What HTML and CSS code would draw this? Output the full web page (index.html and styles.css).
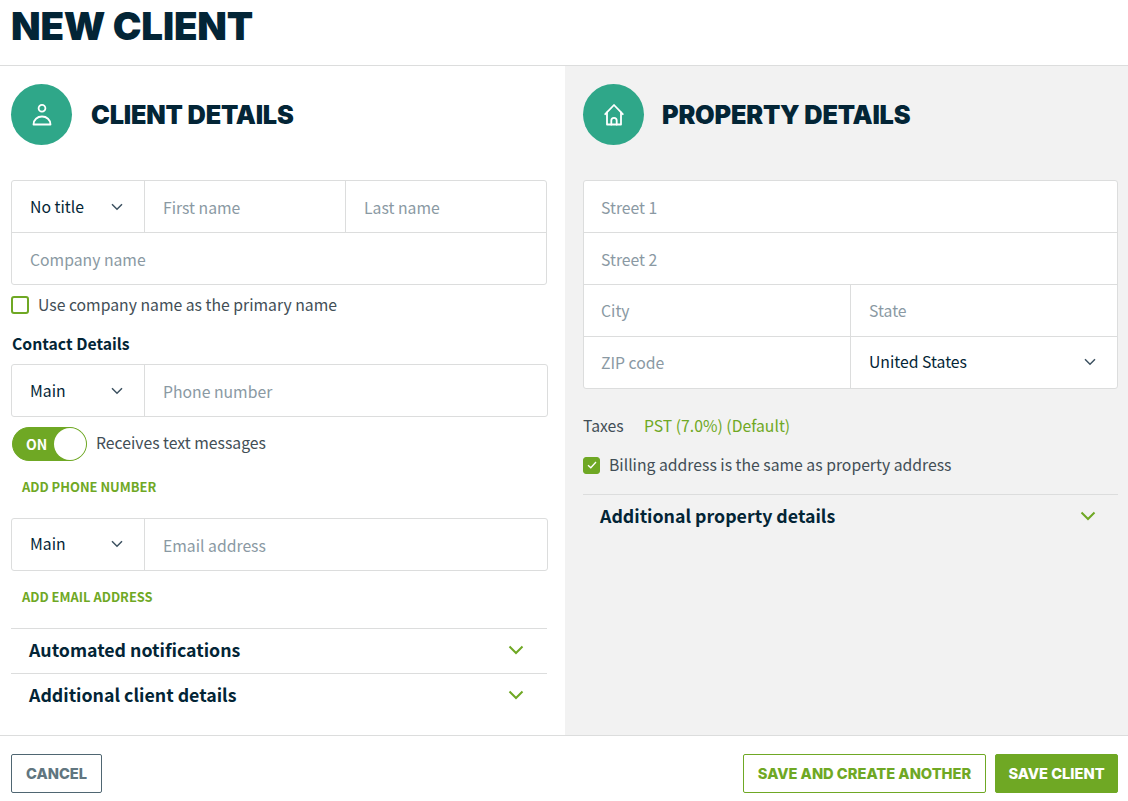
FILE: index.html
```html
<!DOCTYPE html>
<html lang="en">
<head>
<meta charset="utf-8">
<title>New Client</title>
<link rel="stylesheet" href="styles.css">
</head>
<body>
<header class="page-head"><h1>NEW CLIENT</h1></header>
<main class="columns">
  <section class="col col-left">
    <div class="sec-head">
      <span class="badge"><svg width="24" height="24" viewBox="0 0 24 24" fill="none" stroke="#fff" stroke-width="1.800"><circle cx="12" cy="5.200" r="3.400"/><path d="M3.500 21.500c0-4.700 3.800-8 8.500-8s8.500 3.300 8.500 8z" stroke-linejoin="round"/></svg></span>
      <h2>CLIENT DETAILS</h2>
    </div>
    <div class="box">
      <div class="row">
        <div class="cell sel"><span>No title</span><svg class="chev" width="12" height="8" viewBox="0 0 12 8"><path d="M1 1.200l5 5 5-5"/></svg></div>
        <div class="cell ph grow">First name</div>
        <div class="cell ph grow">Last name</div>
      </div>
      <div class="row"><div class="cell ph grow">Company name</div></div>
    </div>
    <label class="check first-check"><span class="cb"></span>Use company name as the primary name</label>
    <h3 class="sub">Contact Details</h3>
    <div class="box wide">
      <div class="row">
        <div class="cell sel"><span>Main</span><svg class="chev" width="12" height="8" viewBox="0 0 12 8"><path d="M1 1.200l5 5 5-5"/></svg></div>
        <div class="cell ph grow">Phone number</div>
      </div>
    </div>
    <div class="toggle-row">
      <span class="toggle"><span class="on">ON</span><span class="knob"></span></span>
      <span class="toggle-label">Receives text messages</span>
    </div>
    <a class="add add-phone">ADD PHONE NUMBER</a>
    <div class="box wide email">
      <div class="row">
        <div class="cell sel"><span>Main</span><svg class="chev" width="12" height="8" viewBox="0 0 12 8"><path d="M1 1.200l5 5 5-5"/></svg></div>
        <div class="cell ph grow">Email address</div>
      </div>
    </div>
    <a class="add add-email">ADD EMAIL ADDRESS</a>
    <div class="acc acc-first"><span>Automated notifications</span><svg class="chev-g" width="16" height="10" viewBox="0 0 16 10"><path d="M1.500 1.500L8 8l6.500-6.500"/></svg></div>
    <div class="acc"><span>Additional client details</span><svg class="chev-g" width="16" height="10" viewBox="0 0 16 10"><path d="M1.500 1.500L8 8l6.500-6.500"/></svg></div>
  </section>
  <section class="col col-right">
    <div class="sec-head">
      <span class="badge"><svg width="24" height="24" viewBox="0 0 24 24" fill="none" stroke="#fff" stroke-width="1.800" stroke-linejoin="round" stroke-linecap="round"><path d="M3.200 11.200L12 2l8.800 9.200"/><path d="M5 9.500V21.500H19V9.500"/><path d="M9.300 21.500v-4a2.700 2.700 0 0 1 5.400 0v4"/></svg></span>
      <h2>PROPERTY DETAILS</h2>
    </div>
    <div class="box white">
      <div class="row"><div class="cell ph grow">Street 1</div></div>
      <div class="row"><div class="cell ph grow">Street 2</div></div>
      <div class="row flat"><div class="cell ph half">City</div><div class="cell ph grow">State</div></div>
      <div class="row flat"><div class="cell ph half">ZIP code</div><div class="cell country grow"><span>United States</span><svg class="chev" width="12" height="8" viewBox="0 0 12 8"><path d="M1 1.200l5 5 5-5"/></svg></div></div>
    </div>
    <div class="taxes"><span class="tax-label">Taxes</span><a class="tax-link">PST (7.0%) (Default)</a></div>
    <label class="check billing"><span class="cb checked"><svg width="12" height="10" viewBox="0 0 12 10" fill="none" stroke="#fff" stroke-width="1.300"><path d="M2 5.200l2.800 2.600L10 2"/></svg></span>Billing address is the same as property address</label>
    <div class="acc acc-prop"><span>Additional property details</span><svg class="chev-g" width="16" height="10" viewBox="0 0 16 10"><path d="M1.500 1.500L8 8l6.500-6.500"/></svg></div>
  </section>
</main>
<footer class="foot">
  <button class="btn btn-cancel">CANCEL</button>
  <span class="spacer"></span>
  <button class="btn btn-outline">SAVE AND CREATE ANOTHER</button>
  <button class="btn btn-solid">SAVE CLIENT</button>
</footer>
</body>
</html>
```
FILE: styles.css
```css
* { box-sizing: border-box; }
html, body { margin: 0; padding: 0; }
body {
  width: 1128px; height: 801px; overflow: hidden; background: #fff;
  font-family: "Noto Sans CJK SC", "Source Sans Pro", "Open Sans", sans-serif;
  font-size: 15.750px; line-height: 22px; color: #424e56;
  display: flex; flex-direction: column;
}
.page-head { height: 66px; border-bottom: 1px solid #dcdddd; padding: 0 11px; flex: none; }
h1 {
  margin: 0; font-family: Inter, sans-serif; font-weight: 900; font-size: 38.500px; line-height: 52px;
  color: #032536; letter-spacing: -0.200px;
}
.columns { display: flex; height: 669px; flex: none; }
.col-left { width: 565px; padding: 18px 18px 0 11px; }
.col-right { width: 563px; background: #f2f2f2; padding: 18px 10px 0 18px; }
.sec-head { display: flex; align-items: center; height: 61px; margin-bottom: 35px; }
.badge {
  width: 61px; height: 61px; border-radius: 50%; background: #2fa789;
  display: flex; align-items: center; justify-content: center; flex: none; margin-right: 18px;
}
.col-left .badge { margin-right: 19px; }
h2 {
  margin: 0; font-family: Inter, sans-serif; font-weight: 900; font-size: 25.300px; line-height: 32px;
  color: #032536; letter-spacing: -0.200px;
}
.box { border: 1px solid #dcdddd; border-radius: 3px; background: #fff; }
.box.wide { margin-right: -1px; }
.row { display: flex; height: 51px; }
.row + .row { border-top: 1px solid #dcdddd; height: 52px; }
.cell { display: flex; align-items: center; padding: 0 18px; height: 100%; }
.cell + .cell { border-left: 1px solid #dcdddd; }
.white .cell:first-child { padding-left: 17px; }
.grow { flex: 1 1 0; min-width: 0; }
.ph { color: #8a99a3; padding-top: 2px; }
.flat .ph { padding-top: 0; }
.sel, .country { color: #032536; justify-content: space-between; }
.sel { width: 132px; flex: none; padding-right: 21px; }
.email .sel { padding-bottom: 2px; }
.country { padding-right: 21px; padding-bottom: 2px; }
.half { width: 266px; flex: none; }
.chev { fill: none; stroke: #3c5160; stroke-width: 1.500; }
.chev-g { fill: none; stroke: #6fa824; stroke-width: 2; }
.check { display: flex; align-items: center; color: #424e56; }
.cb {
  width: 18px; height: 18px; border: 2px solid #6fa824; border-radius: 3px;
  margin-right: 9px; flex: none; display: flex; align-items: center; justify-content: center;
}
.cb.checked { width: 17px; height: 17px; background: #6fa824; border-width: 1px; }
.first-check { margin-top: 9px; height: 22px; }
.sub { margin: 17px 0 9px 1px; font-size: 15.750px; line-height: 22px; font-weight: 700; color: #032536; }
.toggle-row { display: flex; align-items: center; margin-top: 10px; height: 34px; padding-left: 1px; }
.toggle {
  width: 75px; height: 34px; border-radius: 17px; background: #6fa824; border: 1px solid #6fa824;
  display: flex; align-items: center; justify-content: space-between; margin-right: 9px; padding-left: 13px;
}
.toggle-label { margin-bottom: 2px; }
.on { color: #fff; font-weight: 700; font-size: 14px; line-height: 16px; }
.knob { width: 32px; height: 32px; border-radius: 50%; background: #fff; }
.add { display: block; margin-left: 11px; color: #6fa824; font-weight: 700; font-size: 12.900px; line-height: 18px; }
.add-phone { margin-top: 17px; }
.email { margin-top: 22px; }
.add-email { margin-top: 17px; }
.acc {
  display: flex; align-items: center; justify-content: space-between; height: 45px;
  border-top: 1px solid #dcdddd; padding: 0 23px 2px 18px;
  font-weight: 700; font-size: 17.750px; color: #032536;
}
.acc span { margin-bottom: 2px; }
.acc-first { margin-top: 22px; }
.taxes { display: flex; margin-top: 26px; height: 22px; align-items: center; }
.tax-label { width: 61px; }
.tax-link { color: #6fa824; }
.billing { margin-top: 17px; height: 22px; }
.acc-prop { margin-top: 18px; padding-left: 17px; padding-right: 22px; }
.foot { flex: none; height: 66px; border-top: 1px solid #dcdddd; padding: 18px 10px 0 11px; display: flex; align-items: flex-start; background: #fff; }
.spacer { flex: 1; }
.btn {
  height: 39px; border-radius: 2px; font-family: Inter, sans-serif; font-weight: 800; font-size: 14.650px;
  padding: 0; background: #fff; border: 1px solid;
}
.btn-cancel { width: 91px; color: #617680; border-color: #4f6672; }
.btn-outline { width: 243px; color: #6fa824; border-color: #6fa824; margin-right: 9px; }
.btn-solid { width: 123px; background: #6fa824; border-color: #6fa824; color: #fff; }
```
